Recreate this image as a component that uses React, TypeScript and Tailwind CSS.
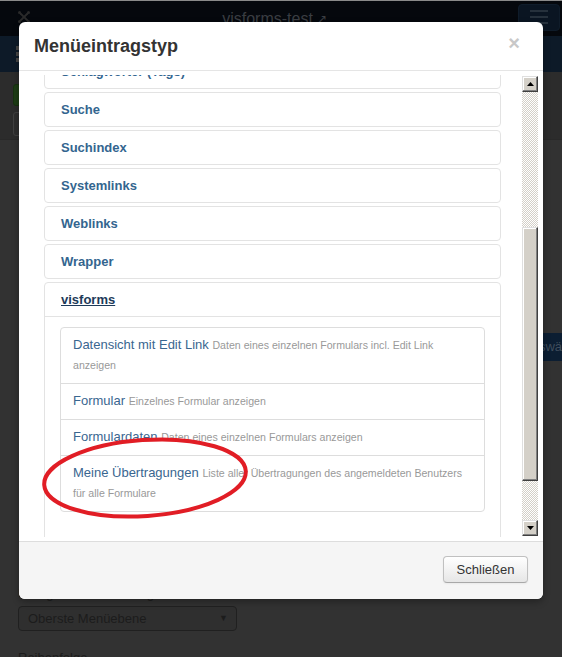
import React from "react";

type Entry = {
  title: string;
  description: string;
};

const menuTypes = [
  "Schlagwörter (Tags)",
  "Suche",
  "Suchindex",
  "Systemlinks",
  "Weblinks",
  "Wrapper",
];

const visformsEntries: Entry[] = [
  {
    title: "Datensicht mit Edit Link",
    description: "Daten eines einzelnen Formulars incl. Edit Link anzeigen",
  },
  { title: "Formular", description: "Einzelnes Formular anzeigen" },
  {
    title: "Formulardaten",
    description: "Daten eines einzelnen Formulars anzeigen",
  },
  {
    title: "Meine Übertragungen",
    description:
      "Liste aller Übertragungen des angemeldeten Benutzers für alle Formulare",
  },
];

function JoomlaMark() {
  return (
    <svg width="14" height="14" viewBox="0 0 14 14" fill="none">
      <g stroke="#2a2a2a" strokeWidth="1.8" strokeLinecap="round">
        <path d="M3.5 3.5 L10.5 10.5" />
        <path d="M10.5 3.5 L3.5 10.5" />
      </g>
      <circle cx="2.5" cy="2.5" r="1.5" fill="#2a2a2a" />
      <circle cx="11.5" cy="2.5" r="1.5" fill="#2a2a2a" />
      <circle cx="2.5" cy="11.5" r="1.5" fill="#2a2a2a" />
      <circle cx="11.5" cy="11.5" r="1.5" fill="#2a2a2a" />
    </svg>
  );
}

function Arrow({ up }: { up?: boolean }) {
  return (
    <div className="flex h-[16px] w-[16px] shrink-0 items-center justify-center border border-t-[#dfdfdf] border-l-[#dfdfdf] border-r-[#404040] border-b-[#404040] bg-[#d4d0c8] shadow-[inset_-1px_-1px_#808080,inset_1px_1px_#ffffff]">
      <svg width="7" height="4" viewBox="0 0 7 4">
        {up ? (
          <path d="M3.5 0 L7 4 L0 4 Z" fill="#000" />
        ) : (
          <path d="M0 0 L7 0 L3.5 4 Z" fill="#000" />
        )}
      </svg>
    </div>
  );
}

function ScrollBar() {
  return (
    <div className="mr-[5px] flex w-[16px] flex-col py-[1px]">
      <Arrow up />
      <div className="flex-1 bg-[image:repeating-conic-gradient(#d4d0c8_0%_25%,#ffffff_0%_50%)] bg-[length:2px_2px]">
        <div className="mt-[135px] h-[254px] border border-t-[#dfdfdf] border-l-[#dfdfdf] border-r-[#404040] border-b-[#404040] bg-[#d4d0c8] shadow-[inset_-1px_-1px_#808080,inset_1px_1px_#ffffff]" />
      </div>
      <Arrow />
    </div>
  );
}

function Background() {
  return (
    <div className="flex flex-col">
      <div className="h-px shrink-0 bg-[#8a8a8a]" />
      {/* navbar */}
      <div className="flex h-[35px] shrink-0 items-center bg-[#05080d]">
        <div className="ml-[17px] mb-[3px]">
          <JoomlaMark />
        </div>
        <div className="flex flex-1 items-center justify-center gap-[4px] text-[16px] text-[#3a3d42]">
          visforms-test
          <span className="text-[12px]">↗</span>
        </div>
        <div className="mr-[2px] mb-[3px] flex h-[27px] w-[42px] flex-col items-center justify-center gap-[4px] rounded-[4px] border border-[#0f1c2a] bg-[#0a1522]">
          <div className="h-[2px] w-[18px] bg-[#26313c]" />
          <div className="h-[2px] w-[18px] bg-[#26313c]" />
          <div className="h-[2px] w-[18px] bg-[#26313c]" />
        </div>
      </div>
      {/* sub header */}
      <div className="flex h-[36px] shrink-0 items-center bg-[#0d1a28] pl-[16px]">
        <div className="flex flex-col gap-[2px]">
          <div className="h-[4px] w-[4px] bg-[#444444]" />
          <div className="h-[4px] w-[4px] bg-[#444444]" />
          <div className="h-[4px] w-[4px] bg-[#444444]" />
        </div>
      </div>
      {/* toolbar */}
      <div className="flex h-[68px] shrink-0 flex-col gap-[6px] border-b border-[#292929] bg-[#2c2c2c] pl-[13px] pt-[12px]">
        <div className="h-[22px] w-[90px] rounded-[3px] border border-[#173210] bg-[#1d3c15]" />
        <div className="h-[24px] w-[90px] rounded-[3px] border border-[#404040] bg-[#2e2e2e]" />
      </div>
      {/* content */}
      <div className="flex flex-col pl-[18px]">
        <div className="mt-[193px] flex justify-end">
          <div className="flex h-[28px] w-[60px] items-center overflow-hidden rounded-l-[4px] bg-[#0c1e32] pl-[21px] text-[13px] whitespace-nowrap text-[#3f4d5c]">
            Auswählen
          </div>
        </div>
        <div className="mt-[224px] text-[13px] leading-[18px] text-[#1c1c1c]">
          Übergeordneter Eintrag
        </div>
        <div className="mt-[3px] flex h-[25px] w-[219px] items-center justify-between rounded-[4px] border border-[#202020] bg-[#2f2f2f] pl-[9px] pr-[8px] text-[13px] text-[#1c1c1c]">
          <span>Oberste Menüebene</span>
          <span className="text-[9px]">▼</span>
        </div>
        <div className="mt-[17px] text-[13px] text-[#1c1c1c]">Reihenfolge</div>
      </div>
    </div>
  );
}

function Modal() {
  return (
    <div className="absolute left-[19px] top-[22px] flex w-[524px] flex-col overflow-hidden rounded-[6px] bg-white shadow-[0_3px_7px_rgba(0,0,0,0.3)]">
      <div className="flex h-[49px] items-center justify-between border-b border-[#e5e5e5] pl-[15px] pr-[23px]">
        <h3 className="text-[18px] font-bold leading-[20px] text-[#333333]">
          Menüeintragstyp
        </h3>
        <span className="mb-[6px] text-[20px] font-bold leading-none text-[#c8c8c8]">
          ×
        </span>
      </div>
      <div className="pt-[4px] pb-[4px]">
        <div className="flex h-[462px] overflow-hidden">
          <div className="flex-1 pl-[25px] pr-[21px]">
            <div className="-mt-[21px] flex flex-col gap-[3px]">
              {menuTypes.map((name) => (
                <div
                  key={name}
                  className="flex h-[35px] shrink-0 items-center rounded-[4px] border border-[#e3e3e3] pl-[16px]"
                >
                  <span className="text-[13px] font-bold text-[#33658f]">
                    {name}
                  </span>
                </div>
              ))}
              <div className="rounded-[4px] border border-[#e3e3e3] pb-[40px]">
                <div className="flex h-[34px] items-center border-b border-[#e3e3e3] pl-[16px]">
                  <span className="text-[13px] font-bold text-[#1d3a5a] underline">
                    visforms
                  </span>
                </div>
                <div className="mx-[15px] mt-[10px] rounded-[4px] border border-[#dddddd]">
                  {visformsEntries.map((entry, i) => (
                    <div
                      key={entry.title}
                      className={`px-[12px] pt-[7px] pb-[8px] text-[13px] leading-[20px] ${
                        i < visformsEntries.length - 1
                          ? "border-b border-[#dddddd]"
                          : ""
                      }`}
                    >
                      <span className="text-[#3a6690]">{entry.title}</span>{" "}
                      <span className="text-[10.6px] leading-[12px] text-[#999999]">
                        {entry.description}
                      </span>
                    </div>
                  ))}
                </div>
              </div>
            </div>
          </div>
          <ScrollBar />
        </div>
      </div>
      <div className="flex h-[58px] items-start justify-end border-t border-[#dddddd] bg-[#f5f5f5] pr-[15px] pt-[14px]">
        <button className="h-[27px] w-[85px] rounded-[4px] border border-[#c0c0c0] border-b-[#a8a8a8] bg-linear-to-b from-white to-[#e6e6e6] text-[13px] text-[#333333] shadow-[inset_0_1px_0_rgba(255,255,255,0.3),0_1px_2px_rgba(0,0,0,0.05)]">
          Schließen
        </button>
      </div>
    </div>
  );
}

export default function App() {
  return (
    <div className="relative h-[657px] w-full overflow-hidden bg-[#323232] font-['Liberation_Sans',Arial,sans-serif]">
      <Background />
      <Modal />
      {/* red annotation */}
      <svg
        className="pointer-events-none absolute left-[38px] top-[432px]"
        width="216"
        height="92"
        viewBox="0 0 216 92"
      >
        <ellipse
          cx="107"
          cy="46"
          rx="101"
          ry="38"
          fill="none"
          stroke="#e11d25"
          strokeWidth="4"
          transform="rotate(-4 107 46)"
        />
      </svg>
    </div>
  );
}
